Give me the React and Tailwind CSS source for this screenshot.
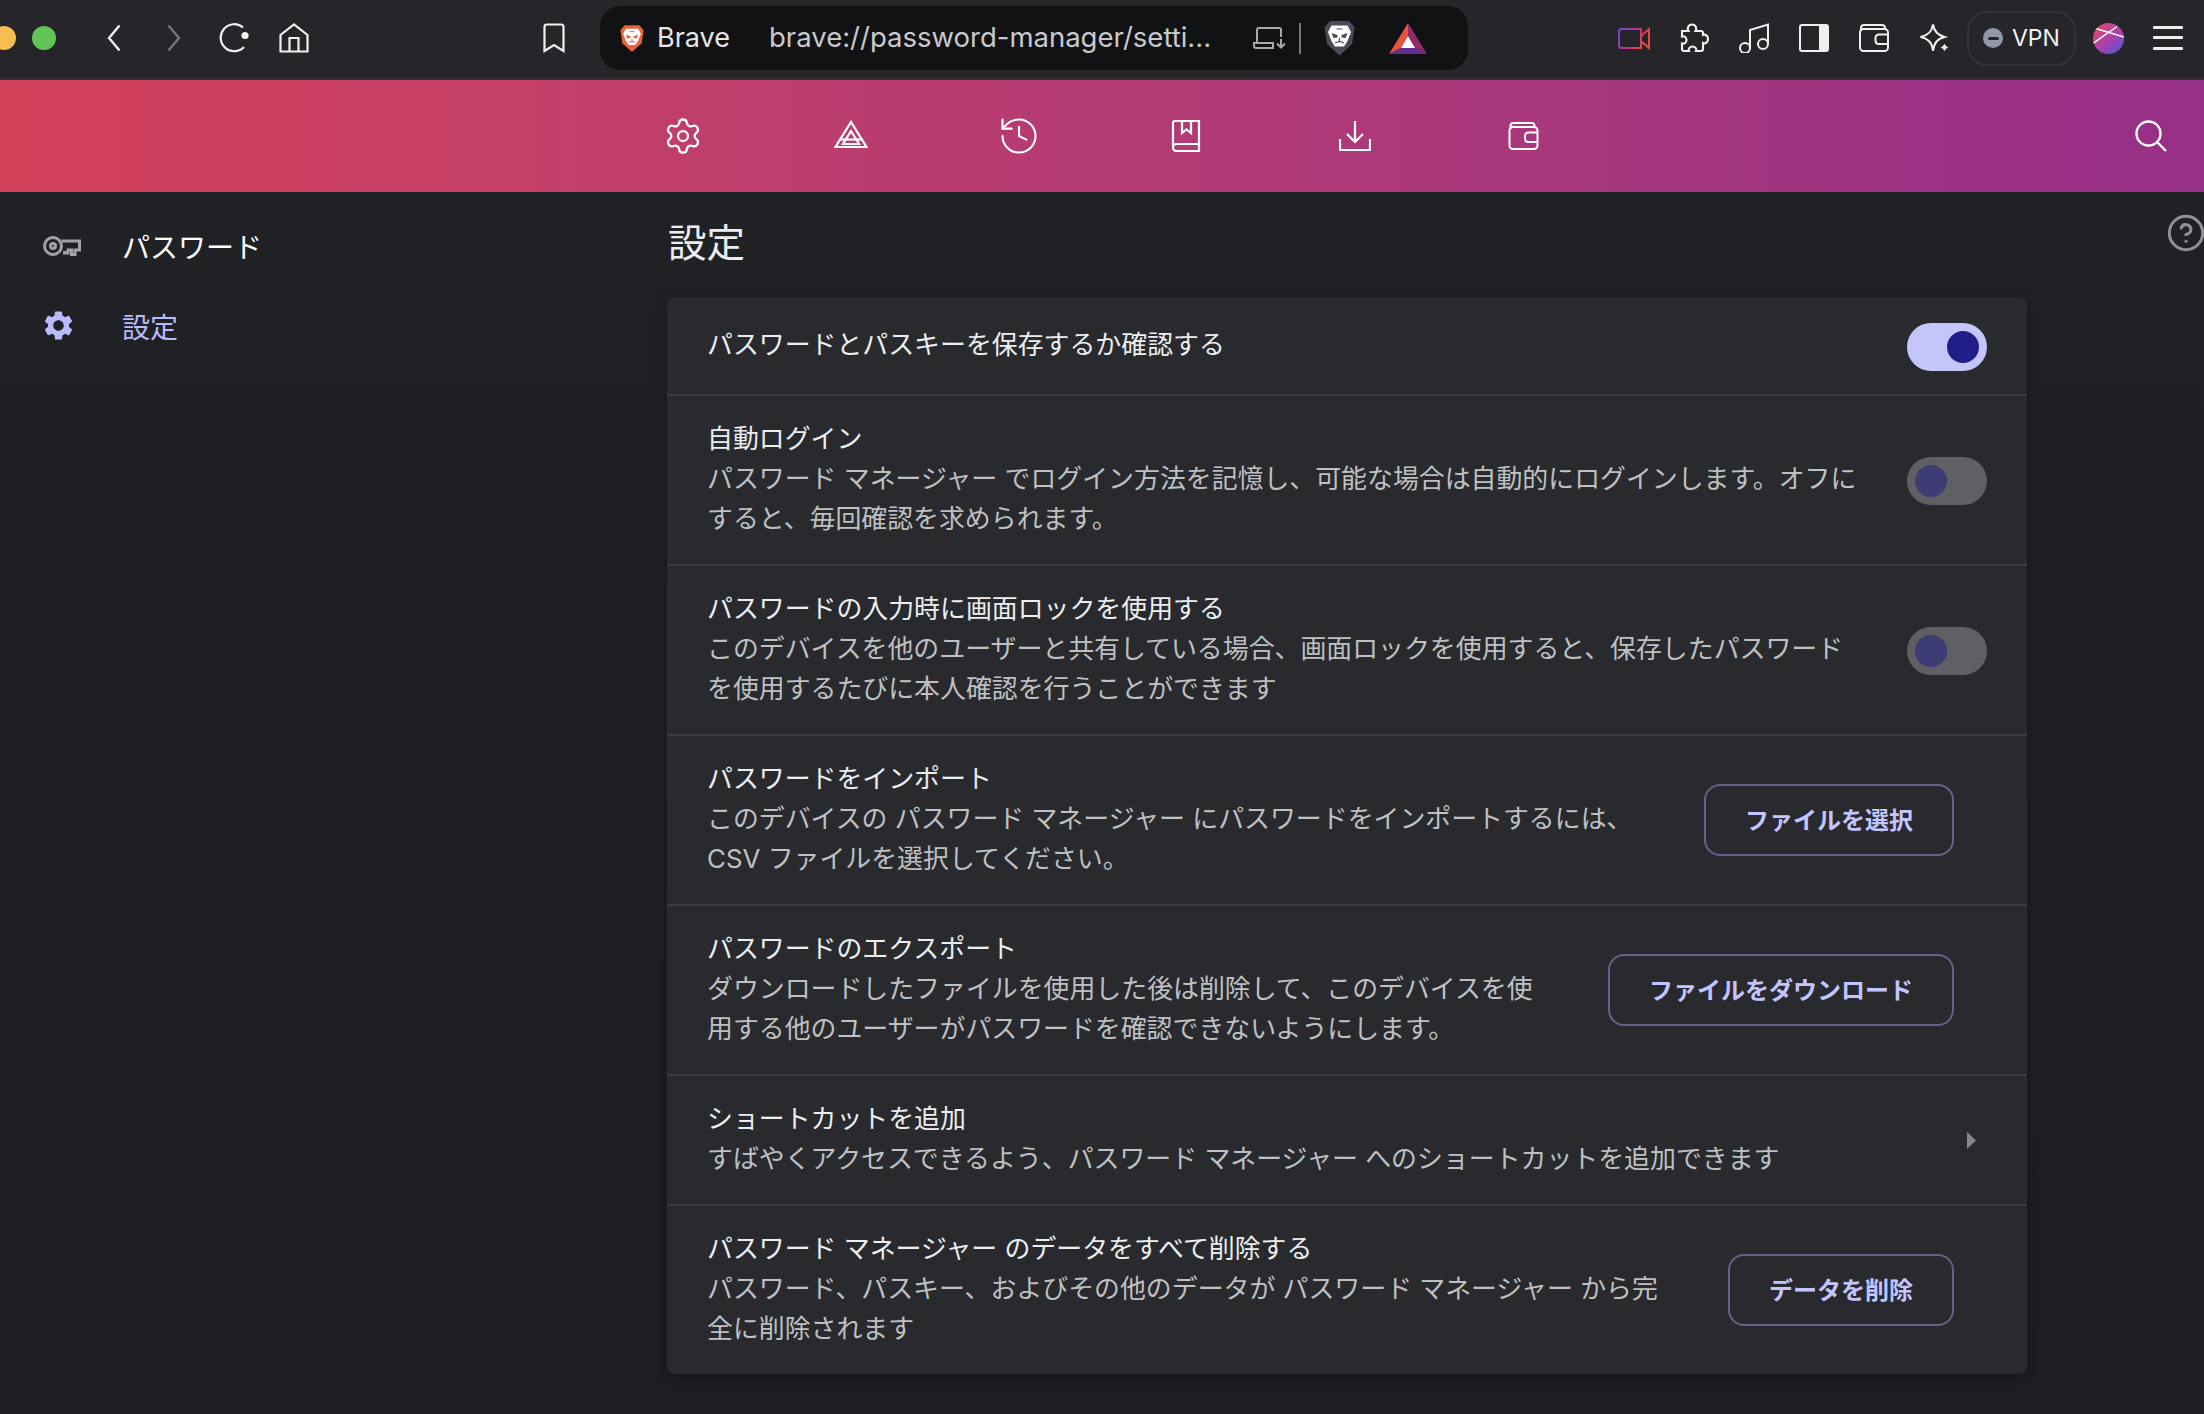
import { Settings, History, CircleHelp } from 'lucide-react';
import { MdSettings } from 'react-icons/md';

const cjk = "font-['Noto_Sans_CJK_JP','Noto_Sans',sans-serif]";
const body = "font-['Inter','Noto_Sans_CJK_JP',sans-serif]";

const Lion = ({ className, shield, eye }) => (
  <svg viewBox="0 0 31 36" className={className}>
    <path d="M6 1 L25 1 L30.5 7 L28 24 L15.5 35.5 L3 24 L0.5 7 Z" fill={shield} />
    <path d="M7.5 5.5 H23.5 L27 12 L23.5 21 L20 26.5 H11 L7.5 21 L4 12 Z" fill="#fff" />
    <path d="M7.5 13 L13.5 15 L13.5 17.5 L9.5 18 Z M23.5 13 L17.5 15 L17.5 17.5 L21.5 18 Z" fill={eye} />
    <path d="M12.5 9 L18.5 9 M15.5 18 V22 M11 23 L15.5 21.5 L20 23" stroke={eye} strokeWidth="1.2" fill="none" />
  </svg>
);

const WalletIcon = ({ className }) => (
  <svg viewBox="0 0 30 28" fill="none" stroke="currentColor" strokeWidth="2" className={className}>
    <rect x="1" y="5" width="28" height="22" rx="3.5" />
    <path d="M2 7 V4 Q2 1 5 1 H23 Q26 1 26 4 V5" />
    <path d="M29 10.5 H20 Q16.5 10.5 16.5 14 V16.5 Q16.5 20 20 20 H29" />
  </svg>
);

const Row = ({ title, lines, children, h = 'h-[170px]', first }) => (
  <div className={`flex items-center pl-[40px] pr-[40px] ${h} ${first ? '' : 'border-t-2 border-[#3a3b3f]'}`}>
    <div className={`flex-1 pb-[2px] leading-[40px] text-[25.9px] ${body}`}>
      <div className="text-[#eceef0]">{title}</div>
      {lines?.map((l) => (
        <div key={l} className="text-[#bfc0c2] whitespace-nowrap">{l}</div>
      ))}
    </div>
    {children}
  </div>
);

const Toggle = ({ on }) => (
  <div className={`w-20 h-12 mt-[2px] rounded-full flex items-center px-2 ${on ? 'bg-[#c3c5fb] justify-end' : 'bg-[#5f5f64] justify-start'}`}>
    <div className={`w-8 h-8 rounded-full ${on ? 'bg-[#201e88]' : 'bg-[#3d3c75]'}`} />
  </div>
);

const FileButton = ({ children }) => (
  <button className={`mr-[33px] h-[72px] px-[39px] pb-[3px] rounded-[16px] border-2 border-[#63638a] text-[#c2c5ff] text-[24px] font-bold whitespace-nowrap ${cjk}`}>
    {children}
  </button>
);

export default function App() {
  return (
    <div className="w-[2204px] h-[1414px] overflow-hidden bg-linear-to-b from-[#212226] to-[#1d1e21] font-['Inter',sans-serif]">
      {/* browser toolbar */}
      <div className="h-20 pb-[2px] flex items-center bg-[#26262a] border-b-2 border-[#2e2e33] text-[#f0f0f0]">
        <div className="w-6 h-6 -ml-2 rounded-full bg-[#f6bd50]" />
        <div className="w-6 h-6 ml-4 rounded-full bg-[#61c454]" />
        <svg viewBox="0 0 14 28" fill="none" stroke="currentColor" strokeWidth="2.4" className="w-[14px] h-7 ml-[51px]"><path d="M12.5 1.5 L2 14 L12.5 26.5" /></svg>
        <svg viewBox="0 0 14 28" fill="none" stroke="#77777b" strokeWidth="2.4" className="w-[14px] h-7 ml-[46px]"><path d="M1.5 1.5 L12 14 L1.5 26.5" /></svg>
        <svg viewBox="0 0 30 30" fill="none" stroke="currentColor" strokeWidth="2.2" className="w-[30px] h-[30px] ml-[38px]">
          <path d="M24 4.5 A13.5 13.5 0 1 0 25 24" />
          <circle cx="26" cy="12.5" r="3.6" fill="currentColor" stroke="none" />
        </svg>
        <svg viewBox="0 0 30 30" fill="none" stroke="currentColor" strokeWidth="2.2" className="w-[30px] h-[30px] ml-[30px]">
          <path d="M1.5 28.5 V12 L15 1.5 L28.5 12 V28.5 Z" />
          <path d="M10.5 28.5 V15 H19.5 V28.5" />
        </svg>
        <svg viewBox="0 0 22 30" fill="none" stroke="currentColor" strokeWidth="2.2" className="w-[22px] h-[30px] ml-[234px]">
          <path d="M1.5 4 Q1.5 1.5 4 1.5 H18 Q20.5 1.5 20.5 4 V28 L11 22 L1.5 28 Z" />
        </svg>

        {/* address pill */}
        <div className="w-[868px] h-16 ml-[35px] pl-5 rounded-[20px] bg-[#111214] flex items-center">
          <Lion className="w-6 h-[29px]" shield="#e8613a" eye="#e8613a" />
          <span className="w-[112px] ml-[13px] text-[27px] text-[#e6e6e9]">Brave</span>
          <span className="w-[484px] text-[27.5px] text-[#c9c9cc] whitespace-nowrap">brave://password-manager/setti...</span>
          <svg viewBox="0 0 33 22" fill="none" stroke="#a9a9ac" strokeWidth="2" className="w-[33px] h-[22px]">
            <path d="M4 15 V3 Q4 1 6 1 H26 Q28 1 28 3 V10" />
            <path d="M1 16 H20 V21 H3 Q1 21 1 19 Z" />
            <path d="M28 12 V20 M24 16.5 L28 20.5 L32 16.5" />
          </svg>
          <div className="w-[2px] h-[31px] ml-[13px] bg-[#77777b]" />
          <Lion className="w-[31px] h-9 ml-[23px]" shield="#4a4b59" eye="#4a4b59" />
          <svg viewBox="0 0 38 31" className="w-[38px] h-[31px] ml-[34px]">
            <polygon points="19,0 0,31 12,25 19,13" fill="#e8533a" />
            <polygon points="19,0 38,31 26,25 19,13" fill="#8f2d69" />
            <polygon points="0,31 38,31 26,25 12,25" fill="#662d91" />
            <polygon points="19,13 26,25 12,25" fill="#fff" />
          </svg>
        </div>

        <svg viewBox="0 0 32 23" fill="none" strokeWidth="2" className="w-8 h-[23px] ml-[150px]">
          <defs>
            <linearGradient id="cam" x1="0" y1="0" x2="1" y2="0.4">
              <stop offset="0" stopColor="#6f43d6" />
              <stop offset="0.55" stopColor="#c0318f" />
              <stop offset="1" stopColor="#ee4a3c" />
            </linearGradient>
          </defs>
          <path d="M3.5 2 H23 V21 H3.5 Q1 21 1 18.5 V4.5 Q1 2 3.5 2 Z M23 9 L31 2 V21 L23 14" stroke="url(#cam)" />
        </svg>
        <svg viewBox="0 0 30 30" fill="none" stroke="currentColor" strokeWidth="2.1" className="w-[30px] h-[30px] ml-[29px]">
          <path d="M3 8 H9.5 C8 5.5 9 1.5 13 1.5 C17 1.5 18 5.5 16.5 8 H22 Q24 8 24 10 V12 C26.5 11 29 12.5 29 16 C29 19.5 26.5 21 24 20 V26 Q24 28 22 28 H17 C18 25.5 16 23.5 13.5 23.5 C11 23.5 9 25.5 10 28 H5 Q3 28 3 26 V20.5 C5.5 21.5 7.5 19.5 7.5 17 C7.5 14.5 5.5 12.5 3 13.5 Z" />
        </svg>
        <svg viewBox="0 0 30 30" fill="none" stroke="currentColor" strokeWidth="2" className="w-[30px] h-[30px] ml-[30px]">
          <circle cx="6" cy="25" r="5" />
          <circle cx="24" cy="21" r="5" />
          <path d="M11 25 V7 L29 1.5 V21" />
        </svg>
        <svg viewBox="0 0 30 28" className="w-[30px] h-7 ml-[30px]">
          <rect x="1" y="1" width="28" height="26" rx="2" fill="none" stroke="currentColor" strokeWidth="2" />
          <rect x="20" y="1" width="9" height="26" fill="currentColor" />
        </svg>
        <WalletIcon className="w-[30px] h-7 ml-[30px]" />
        <svg viewBox="0 0 31 30" fill="none" stroke="currentColor" strokeWidth="2" className="w-[31px] h-[30px] ml-[30px]">
          <path d="M14 1.5 C15 8 18 12 25.5 14 C18 16 15 20 14 28 C13 20 10 16 1.5 14 C10 12 13 8 14 1.5 Z" />
          <path d="M25.5 19 C26 22 27 23 30.5 24.5 C27 25.5 26 27 25.5 30 C25 27 24 25.5 20.5 24.5 C24 23 25 22 25.5 19 Z" fill="currentColor" stroke="#26262a" strokeWidth="1" />
        </svg>
        <div className="w-[109px] h-[55px] ml-[17px] pl-[14px] rounded-[20px] border-2 border-[#333338] flex items-center gap-[9px]">
          <div className="w-5 h-5 rounded-full bg-[#9297ab] flex items-center justify-center">
            <div className="w-[11px] h-[3px] rounded-sm bg-[#26262a]" />
          </div>
          <span className="text-[23px] leading-none">VPN</span>
        </div>
        <svg viewBox="0 0 31 31" className="w-[31px] h-[31px] ml-[17px]">
          <defs>
            <linearGradient id="ava" x1="0.1" y1="0" x2="0.9" y2="1">
              <stop offset="0" stopColor="#e04c62" />
              <stop offset="0.55" stopColor="#aa40ae" />
              <stop offset="1" stopColor="#5058d2" />
            </linearGradient>
            <clipPath id="avaclip"><circle cx="15.5" cy="15.5" r="15.5" /></clipPath>
          </defs>
          <circle cx="15.5" cy="15.5" r="15.5" fill="url(#ava)" />
          <path d="M2 5.3 L31 14 M0 20.5 L24 3.5" stroke="#fff" strokeWidth="1.5" clipPath="url(#avaclip)" />
        </svg>
        <svg viewBox="0 0 30 24" className="w-[30px] h-6 ml-[29px]" fill="#efefef">
          <rect y="0" width="30" height="3" rx="1" />
          <rect y="10" width="30" height="3" rx="1" />
          <rect y="21" width="30" height="3" rx="1" />
        </svg>
      </div>

      {/* gradient nav bar */}
      <div className="h-[112px] grid grid-cols-[599px_1008px_1fr] items-center bg-linear-to-r from-[#d4415a] to-[#962f88] text-white">
        <div />
        <div className="grid grid-cols-6 justify-items-center items-center">
          <Settings size={40} strokeWidth={1.35} />
          <svg viewBox="0 0 34 28" fill="none" stroke="currentColor" strokeWidth="2.2" className="w-[34px] h-7 -mt-[5px]">
            <path d="M17 2 L32.5 27 H1.5 Z" />
            <path d="M17 11 L25 24 H9 Z" />
            <path d="M6.5 19.5 H27.5" />
          </svg>
          <History size={44} strokeWidth={1.15} />
          <svg viewBox="0 0 32 32" fill="none" stroke="currentColor" strokeWidth="2.2" className="w-8 h-8">
            <path d="M2 26 V3 Q2 1 4 1 H28 V31 H6 Q2 31 2 27 Q2 24 6 24 H28" />
            <path d="M11 1 V13 L15.5 9.5 L20 13 V1" />
          </svg>
          <svg viewBox="0 0 32 32" fill="none" stroke="currentColor" strokeWidth="2.2" className="w-8 h-8">
            <path d="M16 1 V21 M8 14 L16 22 L24 14" />
            <path d="M1 19 V30 H31 V19" />
          </svg>
          <WalletIcon className="w-[35px] h-7" />
        </div>
        <div className="flex justify-end pr-[37px]">
          <svg viewBox="0 0 32 32" fill="none" stroke="currentColor" strokeWidth="2.4" className="w-8 h-8">
            <circle cx="13.5" cy="13.5" r="12" />
            <path d="M22 22 L31 31" />
          </svg>
        </div>
      </div>

      <div className="flex">
        {/* sidebar */}
        <div className={`w-[667px] shrink-0 pt-[14px] text-[28px] ${cjk}`}>
          <div className="h-[80px] flex items-center text-white">
            <div className="w-[81px] ml-[41px] pl-[2px]">
              <svg viewBox="0 0 38 20" fill="none" stroke="#a0a2a6" strokeWidth="3" className="w-[38px] h-5">
                <circle cx="10" cy="10" r="8.5" />
                <circle cx="10" cy="10" r="2.5" />
                <path d="M18.5 5 H36.5 V14 H32 V18.5 H28.5 V14 H25 V17 H21.5 V15" />
              </svg>
            </div>
            パスワード
          </div>
          <div className="h-[79px] flex items-center text-[#b9bbfd]">
            <div className="w-[81px] ml-[41px]">
              <MdSettings size={35} />
            </div>
            設定
          </div>
        </div>

        {/* settings column */}
        <div className="w-[1360px] shrink-0">
          <div className={`h-[105px] pb-2 flex items-center pl-px text-[38.5px] text-[#eceef0] ${cjk}`}>設定</div>
          <div className="rounded-lg bg-[#292a2e] shadow-[0_2px_12px_rgba(0,0,0,0.35)]">
            <Row first h="h-[97px]" title="パスワードとパスキーを保存するか確認する">
              <Toggle on />
            </Row>
            <Row
              title="自動ログイン"
              lines={['パスワード マネージャー でログイン方法を記憶し、可能な場合は自動的にログインします。オフに', 'すると、毎回確認を求められます。']}
            >
              <Toggle />
            </Row>
            <Row
              title="パスワードの入力時に画面ロックを使用する"
              lines={['このデバイスを他のユーザーと共有している場合、画面ロックを使用すると、保存したパスワード', 'を使用するたびに本人確認を行うことができます']}
            >
              <Toggle />
            </Row>
            <Row
              title="パスワードをインポート"
              lines={['このデバイスの パスワード マネージャー にパスワードをインポートするには、', 'CSV ファイルを選択してください。']}
            >
              <FileButton>ファイルを選択</FileButton>
            </Row>
            <Row
              title="パスワードのエクスポート"
              lines={['ダウンロードしたファイルを使用した後は削除して、このデバイスを使', '用する他のユーザーがパスワードを確認できないようにします。']}
            >
              <FileButton>ファイルをダウンロード</FileButton>
            </Row>
            <Row
              h="h-[130px]"
              title="ショートカットを追加"
              lines={['すばやくアクセスできるよう、パスワード マネージャー へのショートカットを追加できます']}
            >
              <svg viewBox="0 0 9 17" className="w-[9px] h-[17px] mr-[11px]"><polygon points="0,0 9,8.5 0,17" fill="#85868a" /></svg>
            </Row>
            <Row
              title="パスワード マネージャー のデータをすべて削除する"
              lines={['パスワード、パスキー、およびその他のデータが パスワード マネージャー から完', '全に削除されます']}
            >
              <FileButton>データを削除</FileButton>
            </Row>
          </div>
        </div>

        <CircleHelp size={40} strokeWidth={1.8} className="ml-[139px] mt-[21px] shrink-0 text-[#8e9195]" />
      </div>
    </div>
  );
}
